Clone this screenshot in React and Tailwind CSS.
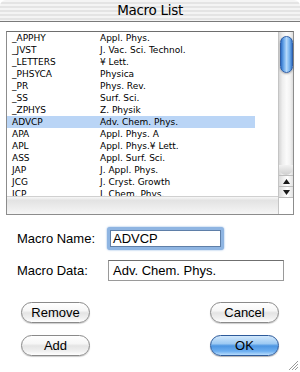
import React from "react";

const rows = [
  ["_APPHY", "Appl. Phys."],
  ["_JVST", "J. Vac. Sci. Technol."],
  ["_LETTERS", "¥ Lett."],
  ["_PHSYCA", "Physica"],
  ["_PR", "Phys. Rev."],
  ["_SS", "Surf. Sci."],
  ["_ZPHYS", "Z. Physik"],
  ["ADVCP", "Adv. Chem. Phys."],
  ["APA", "Appl. Phys. A"],
  ["APL", "Appl. Phys.¥ Lett."],
  ["ASS", "Appl. Surf. Sci."],
  ["JAP", "J. Appl. Phys."],
  ["JCG", "J. Cryst. Growth"],
  ["JCP", "J. Chem. Phys."],
];

function AquaButton({ children, primary }) {
  return (
    <div
      className={
        primary
          ? "w-[69px] h-[21px] rounded-full border border-[#2d5a9a] flex items-center justify-center text-[13px] text-black bg-[linear-gradient(to_bottom,#d2e8fc_0%,#9dcaf3_40%,#4d96e2_52%,#6caef0_80%,#b9ddfc_100%)] shadow-[0_1px_1px_rgba(0,0,0,0.3)]"
          : "w-[69px] h-[21px] rounded-full border border-[#8a8a8a] flex items-center justify-center text-[13px] text-black bg-[linear-gradient(to_bottom,#ffffff_0%,#f6f6f6_40%,#e4e4e4_52%,#f0f0f0_80%,#ffffff_100%)] shadow-[0_1px_1px_rgba(0,0,0,0.2)]"
      }
    >
      {children}
    </div>
  );
}

export default function App() {
  return (
    <div className="w-[300px] h-[372px] bg-white relative overflow-hidden font-['Liberation_Sans',Arial,sans-serif] text-black">
      {/* Title bar */}
      <div className="h-[22px] rounded-t-[6px] border-b border-[#7a7a7a] bg-[repeating-linear-gradient(to_bottom,#f4f4f4_0px,#f4f4f4_2px,#e4e4e4_2px,#e4e4e4_4px)] flex items-center justify-center">
        <span className="text-[13.5px] leading-none font-['DejaVu_Sans',sans-serif] tracking-[-0.3px]">Macro List</span>
      </div>

      <div className="pl-[6px] flex flex-col">
        {/* List */}
        <div className="mt-[9px] w-[288px] h-[184px] border border-[#8c8c8c] border-t-[#6e6e6e] flex">
          <div className="w-[271px] flex flex-col">
            <div className="h-[164px] overflow-hidden bg-white font-['DejaVu_Sans',sans-serif] text-[9px]">
              {rows.map(([k, v], i) => (
                <div
                  key={k}
                  className={
                    i === 7
                      ? "w-[248px] h-[12px] leading-[12px] flex bg-[#bad5f6]"
                      : "w-[248px] h-[12px] leading-[12px] flex"
                  }
                >
                  <span className="w-[93px] pl-[5px] whitespace-nowrap">{k}</span>
                  <span className="whitespace-nowrap">{v}</span>
                </div>
              ))}
            </div>
            <div className="h-[18px] bg-[linear-gradient(to_bottom,#f7f7f7_0%,#e3e3e3_20%,#ececec_60%,#f6f6f6_100%)] border-t border-[#d0d0d0]" />
          </div>
          {/* Vertical scrollbar */}
          <div className="w-[15px] flex flex-col border-l border-[#c4c4c4]">
            <div className="h-[143px] relative bg-[linear-gradient(to_right,#d6d6d6_0%,#eeeeee_25%,#fbfbfb_55%,#f2f2f2_80%,#dcdcdc_100%)] flex flex-col items-center">
              <div className="mt-[4px] w-[13px] h-[37px] rounded-full border border-[#2f5ea6] bg-[linear-gradient(to_right,#2f6fc6_0%,#6aa8ea_25%,#b4d8fa_50%,#7cb6ef_75%,#3574c8_100%)] shadow-[0_1px_2px_rgba(0,0,0,0.3)]" />
              <div className="mt-auto w-[14px] h-[10px] rounded-b-full bg-[linear-gradient(to_bottom,#f2f2f2,#cfcfcf)]" />
            </div>
            <div className="h-[11px] flex items-center justify-center bg-[linear-gradient(to_right,#dcdcdc_0%,#f4f4f4_40%,#ffffff_60%,#e2e2e2_100%)] border-t border-[#bdbdbd]">
              <svg width="7" height="5" viewBox="0 0 7 5"><path d="M3.5 0 L7 5 L0 5 Z" fill="#1a1a1a" /></svg>
            </div>
            <div className="h-[11px] flex items-center justify-center bg-[linear-gradient(to_right,#dcdcdc_0%,#f4f4f4_40%,#ffffff_60%,#e2e2e2_100%)] border-t border-[#bdbdbd]">
              <svg width="7" height="5" viewBox="0 0 7 5"><path d="M0 0 L7 0 L3.5 5 Z" fill="#1a1a1a" /></svg>
            </div>
            <div className="flex-1 bg-white border-t border-[#bdbdbd]" />
          </div>
        </div>

        {/* Fields */}
        <div className="mt-[12px] flex items-center h-[23px]">
          <span className="w-[101px] pl-[11px] text-[13px] leading-none">Macro Name:</span>
          <div className="w-[117px] h-[23px] rounded-[3px] p-[3px] bg-[#8fb5e2] shadow-[0_0_2px_#7aa6dc]">
            <div className="w-full h-full bg-white border border-[#5f7fa8] flex items-center pl-[2px] text-[13px] leading-none">
              ADVCP
            </div>
          </div>
        </div>
        <div className="mt-[10px] flex items-center h-[21px]">
          <span className="w-[102px] pl-[11px] text-[13px] leading-none">Macro Data:</span>
          <div className="w-[176px] h-[21px] bg-white border border-[#9a9a9a] border-t-[#6f6f6f] flex items-center pl-[4px] text-[13px] leading-none">
            Adv. Chem. Phys.
          </div>
        </div>

        {/* Buttons */}
        <div className="mt-[21px] flex justify-between pl-[15px] pr-[15px] w-[288px]">
          <AquaButton>Remove</AquaButton>
          <AquaButton>Cancel</AquaButton>
        </div>
        <div className="mt-[12px] flex justify-between pl-[15px] pr-[15px] w-[288px]">
          <AquaButton>Add</AquaButton>
          <AquaButton primary>OK</AquaButton>
        </div>
      </div>

      {/* Resize grip */}
      <svg className="absolute right-[1px] bottom-[1px]" width="12" height="12" viewBox="0 0 12 12">
        <path d="M11 2 L2 11 M11 5 L5 11 M11 8 L8 11" stroke="#9a9a9a" strokeWidth="1" />
        <path d="M11 3 L3 11 M11 6 L6 11 M11 9 L9 11" stroke="#ffffff" strokeWidth="1" />
      </svg>
    </div>
  );
}
